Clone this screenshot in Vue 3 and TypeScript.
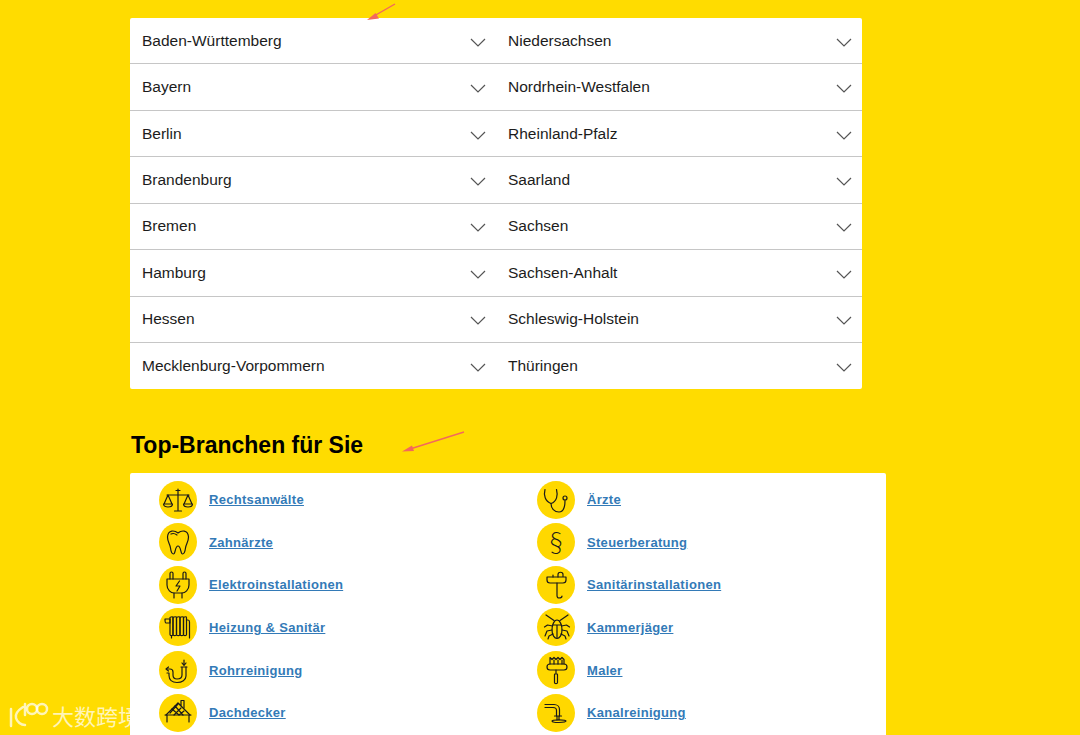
<template>
  <div class="page">
    <section class="states">
      <div v-for="state in states" :key="state" class="state-row">
        <span>{{ state }}</span>
        <svg class="chevron" width="16" height="9" viewBox="0 0 16 9">
          <path d="M1 1l7 7 7-7" />
        </svg>
      </div>
    </section>

    <h2 class="title">Top-Branchen für Sie</h2>

    <section class="branches">
      <div v-for="item in branches" :key="item.name" class="branch">
        <span class="badge">
          <svg width="38" height="38" viewBox="0 0 38 38">
            <path v-for="d in item.paths" :key="d" :d="d" />
            <text v-if="item.glyph" class="glyph" x="19" y="28.5" text-anchor="middle">{{ item.glyph }}</text>
          </svg>
        </span>
        <a href="#" class="branch-link">{{ item.name }}</a>
      </div>
    </section>

    <!-- annotation arrows on top of the screenshot -->
    <svg class="arrows" width="1080" height="735" viewBox="0 0 1080 735">
      <path d="M395 4L374 16" class="arrow-line" />
      <path d="M367 20l12-1.500-3.500-5.500z" class="arrow-head" />
      <path d="M464 432L410 449" class="arrow-line" />
      <path d="M402 451.500l12-.5-2-5.500z" class="arrow-head" />
    </svg>

    <div class="watermark">
      <svg width="42" height="28" viewBox="0 0 42 28">
        <path d="M3 8v17M15 6C9 10 7 14 8 17c1 4 5 7 9 7" />
        <path d="M17 3v11" />
        <circle cx="24" cy="8" r="5" />
        <circle cx="34" cy="8" r="5" />
      </svg>
      <span>大数跨境</span>
    </div>
  </div>
</template>

<script setup lang="ts">
interface Branch {
  name: string
  paths: string[]
  glyph?: string
}

const left = [
  'Baden-Württemberg',
  'Bayern',
  'Berlin',
  'Brandenburg',
  'Bremen',
  'Hamburg',
  'Hessen',
  'Mecklenburg-Vorpommern'
]
const right = [
  'Niedersachsen',
  'Nordrhein-Westfalen',
  'Rheinland-Pfalz',
  'Saarland',
  'Sachsen',
  'Sachsen-Anhalt',
  'Schleswig-Holstein',
  'Thüringen'
]
const states = left.flatMap((name, i) => [name, right[i]])

const branches: Branch[] = [
  {
    name: 'Rechtsanwälte',
    paths: [
      'M19 8v21M15.500 30h7M17 9.500h4M8 14h22',
      'M9 14l-4 9M9 14l4 9M4.500 23h9c0 4-9 4-9 0z',
      'M29 14l-4 9M29 14l4 9M24.500 23h9c0 4-9 4-9 0z'
    ]
  },
  {
    name: 'Ärzte',
    paths: [
      'M8 8.500C6.500 14 8 20.500 14 22.500 20 20.500 21 14 19.500 8.500',
      'M14 22.500c0 5 3.500 8.500 8 8.500 5 0 6-5 6-11.500',
      'M30 17a2 2 0 1 1-4 0 2 2 0 0 1 4 0z'
    ]
  },
  {
    name: 'Zahnärzte',
    paths: [
      'M19 10c-3-2.500-10-4-10.500 4 0 5 2.500 7 3 11 .5 4 1.500 6 3 6 2 0 1.500-8 4.500-8s2.500 8 4.500 8c1.500 0 2.500-2 3-6 .5-4 3-6 3-11C29 6 22 7.500 19 10z',
      'M12 11c2-1 4-.5 6 1'
    ]
  },
  {
    name: 'Steuerberatung',
    paths: [],
    glyph: '§'
  },
  {
    name: 'Elektroinstallationen',
    paths: [
      'M11 13V7.500a1.500 1.500 0 0 1 3 0V13M24 13V7.500a1.500 1.500 0 0 1 3 0V13',
      'M8 13h22v6c0 5-4 8-7 8h-8c-3 0-7-3-7-8z',
      'M15 27v5M23 27v5',
      'M20.500 15l-3.500 5h4l-3 5'
    ]
  },
  {
    name: 'Sanitärinstallationen',
    paths: [
      'M10 11h19v3c0 2-1 3-3 3H13c-2 0-3-1-3-3z',
      'M20 17v12.500c0 2 1 2.500 2 2.500s3 0 3-2',
      'M21 11V8.500c0-3 5-3 5 0v2',
      'M16 11V9'
    ]
  },
  {
    name: 'Heizung & Sanitär',
    paths: [
      'M11 9.500c1.500-1 3-1 3 0v17c0 1.500-3 1.500-3 0z',
      'M14 9.500c1.500-1 3.500-1 3.500 0v17c0 1.500-3.500 1.500-3.500 0z',
      'M17.500 9.500c1.500-1 3.500-1 3.500 0v17c0 1.500-3.500 1.500-3.500 0z',
      'M21 9.500c1.500-1 3.500-1 3.500 0v17c0 1.500-3.500 1.500-3.500 0z',
      'M24.500 9.500c1.500-1 3-1 3 0v17c0 1.500-3 1.500-3 0z',
      'M6 11h5v4H7c-1 0-1-4-1-4zM27.500 12H29c1 0 1.500 1 1.500 2v16',
      'M12.500 28v2'
    ]
  },
  {
    name: 'Kammerjäger',
    paths: [
      'M20 12c3 0 5 5 5 10s-2.500 8.500-5 8.500-5-3.500-5-8.500 2-10 5-10z',
      'M15.500 17h9M20 17v13',
      'M17 12.500L9 7M23 12.500L31 7',
      'M15.500 18l-5-1-3 2M24.500 18l5-1 3 2',
      'M15 22l-5 1-2 5M25 22l5 1 2 5',
      'M16 26l-4 2-1 3M24 26l4 2 1 3'
    ]
  },
  {
    name: 'Rohrreinigung',
    paths: [
      'M25 9v5M23 12l2 2.500 2-2.500',
      'M22 16h6M23 16v8c0 3-2 4-5 4s-4-1.500-4-4v-3c0-2-1-3-3-3H7.500',
      'M27 16v9c0 4-4 6.500-9 6.500s-8-3-8-7V22H8',
      'M9.500 16l-2.500 2 2.500 2'
    ]
  },
  {
    name: 'Maler',
    paths: [
      'M13 13V6.500l2 2 2-2 2 2 2-2 2 2 2-2 2 2V13',
      'M13 13h14c2 0 3 1 3 3s-1 3-3 3H13c-2 0-3-1-3-3s1-3 3-3z',
      'M19 19v3M17.500 23.500c0-1 3-1 3 0v8c0 1.500-3 1.500-3 0z',
      'M17 9v4M21 9v4M25 9v4'
    ]
  },
  {
    name: 'Dachdecker',
    paths: [
      'M7 21L19 9l3 2.500M19 9l12 12',
      'M22 11V6.500h3V14',
      'M8 21v7M30 21v7M6 21h26',
      'M13 15l7 6M16 12l8 9M22 14l-7 7M25 17l-5 4M19 10l-8 9'
    ]
  },
  {
    name: 'Kanalreinigung',
    paths: [
      'M8 10.500h9c3 0 5.500 2 5.500 5V22',
      'M8 13.500h8c2 0 3.500 1 3.500 3V22',
      'M17.500 22h7M20 22v4M22 22v4',
      'M15 27c0-1.500 14-1.500 14 0s-14 2.500-14 0z'
    ]
  }
]
</script>

<style scoped>
.page {
  position: relative;
  height: 735px;
  overflow: hidden;
  box-sizing: border-box;
  padding: 18px 0 0 130px;
  background: #ffdc00;
  font-family: 'Liberation Sans', Arial, sans-serif;
}

.states {
  display: grid;
  grid-template-columns: 366px 366px;
  width: 732px;
  background: #fff;
  border-radius: 2px;
}

.state-row {
  display: flex;
  align-items: center;
  justify-content: space-between;
  box-sizing: border-box;
  height: 46.43px;
  padding: 0 10px 0 12px;
  border-bottom: 1px solid #c6c6c6;
  font-size: 15.500px;
  color: #1c1c1c;
}

.state-row:nth-last-child(-n + 2) {
  border-bottom: none;
}

.chevron {
  margin-top: 3px;
  fill: none;
  stroke: #555;
  stroke-width: 1.200;
}

.title {
  margin: 43px 0 14px 1px;
  font-size: 23px;
  line-height: 27px;
  font-weight: 700;
  color: #000;
}

.branches {
  display: grid;
  grid-template-columns: 378px 378px;
  width: 756px;
  height: 300px;
  align-content: start;
  box-sizing: border-box;
  padding: 5px 0 0 29px;
  background: #fff;
  border-radius: 2px 2px 0 0;
}

.branch {
  display: flex;
  align-items: center;
  gap: 12px;
  height: 42.600px;
}

.badge {
  display: block;
  flex: none;
  width: 38px;
  height: 38px;
  border-radius: 50%;
  background: #ffd800;
}

.badge svg {
  display: block;
  fill: none;
  stroke: #1a1a1a;
  stroke-width: 1.200;
  stroke-linecap: round;
  stroke-linejoin: round;
}

.glyph {
  fill: #1a1a1a;
  stroke: none;
  font-family: Lato, 'Liberation Sans', sans-serif;
  font-weight: 300;
  font-size: 28px;
}

.branch-link {
  font-size: 13px;
  font-weight: 700;
  letter-spacing: 0.300px;
  color: #337ab7;
  text-decoration: underline;
}

.arrows {
  position: absolute;
  top: 0;
  left: 0;
  pointer-events: none;
}

.arrow-line {
  fill: none;
  stroke: #f3685c;
  stroke-width: 1.400;
}

.arrow-head {
  fill: #f3685c;
}

.watermark {
  position: absolute;
  left: 8px;
  bottom: 6px;
  display: flex;
  align-items: center;
  gap: 2px;
  color: rgba(255, 255, 255, 0.72);
  font-family: 'Noto Sans CJK SC', sans-serif;
  font-size: 22px;
  line-height: 28px;
}

.watermark svg {
  fill: none;
  stroke: rgba(255, 255, 255, 0.72);
  stroke-width: 2.500;
  stroke-linecap: round;
}
</style>
